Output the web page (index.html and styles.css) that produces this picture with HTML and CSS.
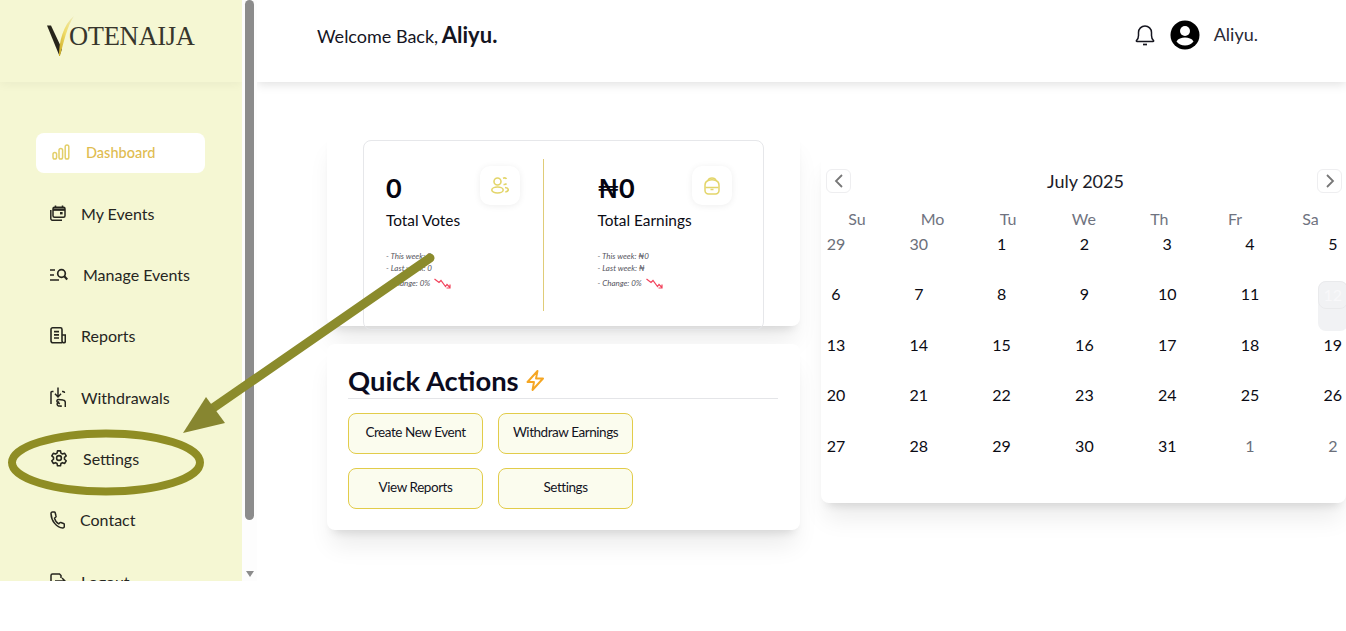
FILE: index.html
```html
<!DOCTYPE html>
<html lang="en">
<head>
    <meta charset="UTF-8">
    <title>VoteNaija Dashboard</title>
    <link rel="stylesheet" href="styles.css">
</head>
<body>
    <div class="app">
        <aside class="sidebar">
            <div class="brand">
                <svg class="brand-mark" width="27" height="41" viewBox="0 0 27 41">
                    <defs>
                        <linearGradient id="gold" x1="0" y1="1" x2="1" y2="0">
                            <stop offset="0" stop-color="#c9a81e"/>
                            <stop offset="0.5" stop-color="#f0dc6a"/>
                            <stop offset="1" stop-color="#eceabc"/>
                        </linearGradient>
                    </defs>
                    <path d="M0 9.500 L4 9.500 L15 33 L12.500 40 Z" fill="#26241a"/>
                    <path d="M12 40 C12 26 16 9 27 0 C20 11 17 25 13 40 Z" fill="url(#gold)"/>
                </svg>
                <span class="brand-name">OTENAIJA</span>
            </div>
            <nav class="nav">
                <a class="nav-item active">
                    <svg width="18" height="16" viewBox="0 0 18 16" fill="none" stroke="#e3cf6a" stroke-width="1.500"><rect x="1" y="8.500" width="3.600" height="6.500" rx="1.800"/><rect x="7" y="4.500" width="3.600" height="10.500" rx="1.800"/><rect x="13.200" y="1" width="3.600" height="14" rx="1.800"/></svg>
                    <span>Dashboard</span>
                </a>
                <a class="nav-item">
                    <svg width="16" height="16" viewBox="0 0 16 16" fill="none" stroke="#26261f" stroke-width="1.500"><rect x="3" y="2.200" width="12" height="10" rx="1.500"/><path d="M3 4.600h12" stroke-width="2.500"/><path d="M5.500 .5v2M12.500 .5v2"/><rect x="10" y="7" width="2.600" height="2.400" fill="#26261f" stroke="none"/><path d="M.8 5v8.500a1.800 1.800 0 0 0 1.800 1.800H12"/></svg>
                    <span>My Events</span>
                </a>
                <a class="nav-item">
                    <svg width="18" height="14" viewBox="0 0 18 14" fill="none" stroke="#26261f" stroke-width="1.700"><path d="M0 2h5M0 7h4M0 12h9"/><circle cx="11.500" cy="5.500" r="3.800"/><path d="M14.300 8.300l3 3.200" stroke-width="2.200"/></svg>
                    <span>Manage Events</span>
                </a>
                <a class="nav-item">
                    <svg width="16" height="17" viewBox="0 0 16 17" fill="none" stroke="#26261f" stroke-width="1.600"><path d="M12 15.800H3a2 2 0 0 1-2-2V2.400A1.600 1.600 0 0 1 2.600.8h7.800A1.600 1.600 0 0 1 12 2.400v11.400a2 2 0 0 0 2 2 1.500 1.500 0 0 0 1.300-1.600V8H12"/><path d="M4 4.600h5M4 7.800h5M4 11h5" stroke-width="1.700"/></svg>
                    <span>Reports</span>
                </a>
                <a class="nav-item">
                    <svg width="16" height="21" viewBox="0 0 16 21" fill="none" stroke="#26261f" stroke-width="1.500"><path d="M1 17V5.500a1 1 0 0 1 1-1h1.500M12 4.500h1a1.500 1.500 0 0 1 1.500 1.500"/><path d="M8 .5v9M5 6.800l3 3.200 3-3.200"/><path d="M15.300 20v-4.500a2.500 2.500 0 0 0-2.300-2.500l-4.500-.5a1.500 1.500 0 0 0-1 2.700l2.300 1.600M9 14.500l-1.500 1.500a2 2 0 0 0 1 3h2.500v1"/></svg>
                    <span>Withdrawals</span>
                </a>
                <a class="nav-item">
                    <svg width="18" height="18" viewBox="0 0 24 24" fill="none" stroke="#26261f" stroke-width="2.100"><circle cx="12" cy="12" r="3.200"/><path d="M10 2.500h4l.6 3 2.100 1.200 2.900-1 2 3.500-2.300 2v2.500l2.300 2-2 3.500-2.900-1-2.100 1.200-.6 3h-4l-.6-3-2.100-1.200-2.900 1-2-3.500 2.300-2v-2.500l-2.300-2 2-3.500 2.900 1 2.100-1.200z" stroke-linejoin="round"/></svg>
                    <span>Settings</span>
                </a>
                <a class="nav-item">
                    <svg width="15" height="18" viewBox="0 0 15 18" fill="none" stroke="#26261f" stroke-width="1.500"><path d="M4.200 1H2.500A1.500 1.500 0 0 0 1 2.600C1.300 10 6.500 16.500 12.800 17a1.500 1.500 0 0 0 1.500-1.500v-2a1 1 0 0 0-.7-1l-2.800-1a1 1 0 0 0-1 .3l-1 1.100C7 12 5 9.300 4.500 7.200L5.800 6a1 1 0 0 0 .2-1L5.200 1.700A1 1 0 0 0 4.200 1z"/></svg>
                    <span>Contact</span>
                </a>
                <a class="nav-item">
                    <svg width="16" height="16" viewBox="0 0 16 16" fill="none" stroke="#26261f" stroke-width="1.500"><path d="M11 5V2.500L9.500 1H2.500A1.500 1.500 0 0 0 1 2.500v11A1.500 1.500 0 0 0 2.500 15H10"/><path d="M5 8h10M12 5l3 3-3 3"/></svg>
                    <span>Logout</span>
                </a>
            </nav>
        </aside>

        <div class="scrollbar">
            <div class="scrollbar-thumb"></div>
            <div class="scrollbar-arrow"></div>
        </div>

        <main class="main">
            <header class="topbar">
                <div class="welcome">Welcome Back, <strong>Aliyu.</strong></div>
                <div class="user">
                    <svg width="20" height="22" viewBox="0 0 20 22" fill="none" stroke="#15151f" stroke-width="1.500"><path d="M1.500 16.500c1.300-1.200 2-2.500 2-5V8.500a6.500 6.500 0 0 1 13 0v3c0 2.500.7 3.800 2 5 .4.500.1 1-.5 1H2c-.6 0-.9-.5-.5-1z"/><path d="M8 20.500h4" stroke-width="1.700"/></svg>
                    <svg class="avatar" width="30" height="30" viewBox="0 0 30 30"><circle cx="15" cy="15" r="14.500" fill="#000"/><circle cx="15" cy="11" r="5" fill="#fff"/><path d="M6.500 21.500c1.500-3 5-4 8.500-4s7 1 8.500 4c-2 2.500-5 4-8.500 4s-6.500-1.500-8.500-4z" fill="#fff"/></svg>
                    <span class="user-name">Aliyu.</span>
                </div>
            </header>

            <div class="content">
                <div class="left-col">
                    <section class="card stats-card">
                        <div class="stats">
                            <div class="stat">
                                <div class="stat-top">
                                    <div>
                                        <div class="stat-value">0</div>
                                        <div class="stat-label">Total Votes</div>
                                    </div>
                                    <div class="stat-icon">
                                        <svg width="18" height="17" viewBox="0 0 18 17" fill="none" stroke="#e3d56a" stroke-width="1.600"><circle cx="6.500" cy="4.500" r="3.500"/><ellipse cx="6.500" cy="13" rx="5.700" ry="3"/><path d="M12 1.200c1.500-.5 3-.2 3.500.8M15.500 6.500c-.5.800-1.500 1.200-3 1M14 10.500c2 .3 3.300 1.200 3.300 2.300s-1.300 1.900-3 2.200"/></svg>
                                    </div>
                                </div>
                                <ul class="stat-lines">
                                    <li>- This week: 0</li>
                                    <li>- Last week: 0</li>
                                    <li>- Change: 0%
                                        <svg width="17" height="11" viewBox="0 0 17 11" fill="none" stroke="#f2435c" stroke-width="1.200"><path d="M.5 1l4.500 3.500 2-2 4.500 6 1.500-2 3 3M16 6.500V10h-3.500"/></svg>
                                    </li>
                                </ul>
                            </div>
                            <div class="stat stat-second">
                                <div class="stat-top">
                                    <div>
                                        <div class="stat-value">₦0</div>
                                        <div class="stat-label">Total Earnings</div>
                                    </div>
                                    <div class="stat-icon">
                                        <svg width="16" height="18" viewBox="0 0 16 18" fill="none" stroke="#e3d56a" stroke-width="1.500"><path d="M1 10V8a5 5 0 0 1 3-4.500C4.500 1.800 6 1 8 1s3.500.8 4 2.500A5 5 0 0 1 15 8v5.500a3.500 3.500 0 0 1-3.500 3.500h-7A3.500 3.500 0 0 1 1 13.500z"/><path d="M1.500 10.500h13"/><path d="M4 3.500c2.500-.8 5.500-.8 8 0"/><path d="M6.500 12.500h3"/></svg>
                                    </div>
                                </div>
                                <ul class="stat-lines">
                                    <li>- This week: ₦0</li>
                                    <li>- Last week: ₦</li>
                                    <li>- Change: 0%
                                        <svg width="17" height="11" viewBox="0 0 17 11" fill="none" stroke="#f2435c" stroke-width="1.200"><path d="M.5 1l4.500 3.500 2-2 4.500 6 1.500-2 3 3M16 6.500V10h-3.500"/></svg>
                                    </li>
                                </ul>
                            </div>
                        </div>
                    </section>

                    <section class="card actions-card">
                        <h2 class="actions-title">Quick Actions
                            <svg width="20" height="21" viewBox="0 0 20 21" fill="none" stroke="#f5a623" stroke-width="1.900" stroke-linejoin="round"><path d="M12.500 1L2.500 12h6.500L7.500 20 18 8.500h-7z"/></svg>
                        </h2>
                        <div class="actions">
                            <button class="action">Create New Event</button>
                            <button class="action">Withdraw Earnings</button>
                            <button class="action">View Reports</button>
                            <button class="action">Settings</button>
                        </div>
                    </section>
                </div>

                <section class="calendar">
                    <div class="cal-head">
                        <button class="cal-nav"><svg width="10" height="14" viewBox="0 0 10 14" fill="none" stroke="#777" stroke-width="1.800"><path d="M8 1L2 7l6 6"/></svg></button>
                        <div class="cal-title">July 2025</div>
                        <button class="cal-nav"><svg width="10" height="14" viewBox="0 0 10 14" fill="none" stroke="#777" stroke-width="1.800"><path d="M2 1l6 6-6 6"/></svg></button>
                    </div>
                    <div class="cal-weekdays">
                        <span>Su</span><span>Mo</span><span>Tu</span><span>We</span><span>Th</span><span>Fr</span><span>Sa</span>
                    </div>
                    <div class="cal-days">
                        <span class="day muted">29</span><span class="day muted">30</span><span class="day">1</span><span class="day">2</span><span class="day">3</span><span class="day">4</span><span class="day">5</span>
                        <span class="day">6</span><span class="day">7</span><span class="day">8</span><span class="day">9</span><span class="day">10</span><span class="day">11</span><span class="day today"><b>12</b></span>
                        <span class="day">13</span><span class="day">14</span><span class="day">15</span><span class="day">16</span><span class="day">17</span><span class="day">18</span><span class="day">19</span>
                        <span class="day">20</span><span class="day">21</span><span class="day">22</span><span class="day">23</span><span class="day">24</span><span class="day">25</span><span class="day">26</span>
                        <span class="day">27</span><span class="day">28</span><span class="day">29</span><span class="day">30</span><span class="day">31</span><span class="day muted">1</span><span class="day muted">2</span>
                    </div>
                </section>
            </div>
        </main>

        <!-- tutorial markup drawn over the page -->
        <svg class="annotation" viewBox="0 250 450 250">
            <ellipse cx="106" cy="462.500" rx="94" ry="29" fill="none" stroke="#8f8d24" stroke-width="8"/>
            <path d="M430 258L213 408" stroke="#8b8b2c" stroke-width="9" stroke-linecap="round"/>
            <path d="M183 433L206 397L225 423Z" fill="#878630"/>
        </svg>
    </div>
</body>
</html>
```

FILE: styles.css
```css
*{
    margin: 0;
    padding: 0;
    box-sizing: border-box;
    font-family: "Lato", sans-serif;
}
body{
    background-color: #fff;
    color: #0b0b14;
}
.app{
    position: relative;
    display: flex;
    height: 581px;
    overflow: hidden;
}

/* sidebar */
.sidebar{
    width: 242px;
    flex-shrink: 0;
    background-color: #f5f7d3;
    overflow: hidden;
}
.brand{
    height: 82px;
    display: flex;
    align-items: center;
    padding: 0 0 10px 47px;
    box-shadow: 0 2px 10px rgba(0, 0, 0, 0.05);
}
.brand-mark{
    flex-shrink: 0;
    margin-right: -5px;
}
.brand-name{
    font-family: "Liberation Serif", serif;
    font-size: 26.5px;
    letter-spacing: -0.3px;
    color: #38362c;
}
.nav{
    display: flex;
    flex-direction: column;
    gap: 21.3px;
    padding: 51px 0 0 36px;
}
.nav-item{
    display: flex;
    align-items: center;
    gap: 15px;
    height: 40px;
    padding-left: 14px;
    padding-bottom: 2px;
    font-size: 16px;
    color: #26261f;
}
.nav-item svg{
    flex-shrink: 0;
}
.nav-item.active{
    width: 169px;
    padding-left: 16px;
    gap: 16px;
    border-radius: 8px;
    background-color: #fff;
    color: #e0bc50;
    font-size: 14.5px;
    font-weight: 500;
}
.scrollbar{
    width: 15px;
    flex-shrink: 0;
    display: flex;
    flex-direction: column;
    align-items: center;
    background-color: #fdfdfd;
}
.scrollbar-thumb{
    width: 9px;
    height: 520px;
    border-radius: 5px;
    background-color: #8c8c8c;
}
.scrollbar-arrow{
    margin-top: 51px;
    border-left: 4.500px solid transparent;
    border-right: 4.500px solid transparent;
    border-top: 6px solid #8c8c8c;
}

/* main */
.main{
    flex: 1;
    min-width: 0;
    overflow: hidden;
}
.topbar{
    height: 82px;
    display: flex;
    align-items: center;
    justify-content: space-between;
    padding: 0 88px 12px 60px;
    background-color: #fff;
    box-shadow: 0 2px 10px rgba(0, 0, 0, 0.13);
}
.welcome{
    font-size: 18px;
    color: #15151f;
    margin-top: -2px;
}
.welcome strong{
    font-size: 22px;
    font-weight: 700;
    margin-left: -1px;
}
.user{
    display: flex;
    align-items: center;
}
.avatar{
    margin: 0 15px;
}
.user-name{
    font-size: 18px;
    color: #2a2a36;
    margin-left: -1px;
    margin-top: -2px;
}
.content{
    display: flex;
    align-items: flex-start;
    gap: 21px;
    padding: 48px 0 0 70px;
    width: 1150px;
}
.left-col{
    width: 473px;
    flex-shrink: 0;
    display: flex;
    flex-direction: column;
    gap: 18px;
}
.card{
    background-color: #fff;
    border-radius: 8px;
    box-shadow: 0 20px 25px -5px rgba(0, 0, 0, 0.08), 0 8px 10px -6px rgba(0, 0, 0, 0.12);
}

/* stats */
.stats-card{
    height: 196px;
    padding: 10px 36px 0;
}
.stats{
    display: flex;
    height: 190px;
    border: 1px solid #e6e7ea;
    border-radius: 8px;
    padding: 18px 0 0;
}
.stat{
    width: 180px;
    height: 152px;
    padding: 8px 23px 0 22px;
    border-right: 1px solid #e0cc78;
}
.stat-second{
    width: 220px;
    padding-left: 54px;
    padding-right: 31px;
    border-right: none;
}
.stat-top{
    display: flex;
    justify-content: space-between;
    align-items: flex-start;
}
.stat-value{
    font-size: 27px;
    font-weight: 700;
    line-height: 28px;
    margin-top: 7px;
    color: #050510;
}
.stat-label{
    font-size: 15.4px;
    margin-top: 8px;
    line-height: 20px;
    white-space: nowrap;
}
.stat-icon{
    width: 40px;
    height: 39px;
    margin-top: -1px;
    display: flex;
    align-items: center;
    justify-content: center;
    border-radius: 10px;
    background-color: #fff;
    box-shadow: 0 1px 7px rgba(0, 0, 0, 0.07);
}
.stat-lines{
    list-style: none;
    margin-top: 20px;
    font-size: 8px;
    font-style: italic;
    color: #555560;
    white-space: nowrap;
}
.stat-lines li{
    height: 12px;
    line-height: 12px;
}
.stat-lines li:last-child{
    margin-top: 3px;
}
.stat-lines svg{
    vertical-align: -3px;
    margin-left: 2px;
}

/* quick actions */
.actions-card{
    height: 186px;
    padding: 20px 22px 0 21px;
}
.actions-title{
    font-size: 27.4px;
    font-weight: 700;
    line-height: 34px;
    height: 34px;
    color: #0b0b1e;
    border-bottom: 1px solid #e4e5e8;
    box-sizing: content-box;
}
.actions-title svg{
    vertical-align: 0;
}
.actions{
    display: grid;
    grid-template-columns: 135px 135px;
    grid-auto-rows: 41px;
    gap: 14px 15px;
    margin-top: 14px;
}
.action{
    border: 1px solid #e2cc4a;
    border-radius: 8px;
    background-color: #fbfcee;
    font-size: 13.5px;
    letter-spacing: -0.45px;
    color: #14141e;
    padding-bottom: 4px;
}

/* calendar */
.calendar{
    width: 525px;
    height: 353px;
    flex-shrink: 0;
    margin-top: 20px;
    border-radius: 8px;
    background-color: #fff;
    box-shadow: 0 20px 25px -5px rgba(0, 0, 0, 0.08), 0 8px 10px -6px rgba(0, 0, 0, 0.12);
    overflow: hidden;
}
.cal-head{
    display: flex;
    align-items: center;
    justify-content: space-between;
    padding: 19px 4px 0 5px;
}
.cal-nav{
    width: 25px;
    height: 24px;
    display: flex;
    align-items: center;
    justify-content: center;
    border: 1px solid #eeeef0;
    border-radius: 6px;
    background-color: #fff;
}
.cal-title{
    font-size: 18px;
    color: #1c1c28;
    margin-right: -3px;
}
.cal-weekdays{
    display: grid;
    grid-template-columns: repeat(7, 72px);
    column-gap: 3.600px;
    margin-top: 16px;
    text-align: center;
    font-size: 16px;
    line-height: 20px;
    color: #6f7380;
}
.cal-days{
    display: grid;
    grid-template-columns: repeat(7, 30px);
    grid-auto-rows: 50.500px;
    column-gap: 52.800px;
    margin-top: 1.700px;
}
.day{
    height: 26px;
    line-height: 26px;
    text-align: center;
    font-size: 16px;
    color: #0b0b14;
}
.day.muted{
    color: #6b6f7a;
}
.day.today{
    height: 50px;
    border-radius: 8px;
    background-color: #f1f2f4;
}
.day.today b{
    display: block;
    height: 28px;
    font-weight: 400;
    color: #f8f8fa;
    border: 1px solid #e9eaec;
    border-radius: 8px;
}

.annotation{
    position: absolute;
    left: 0;
    top: 250px;
    width: 450px;
    height: 250px;
    pointer-events: none;
}
```
